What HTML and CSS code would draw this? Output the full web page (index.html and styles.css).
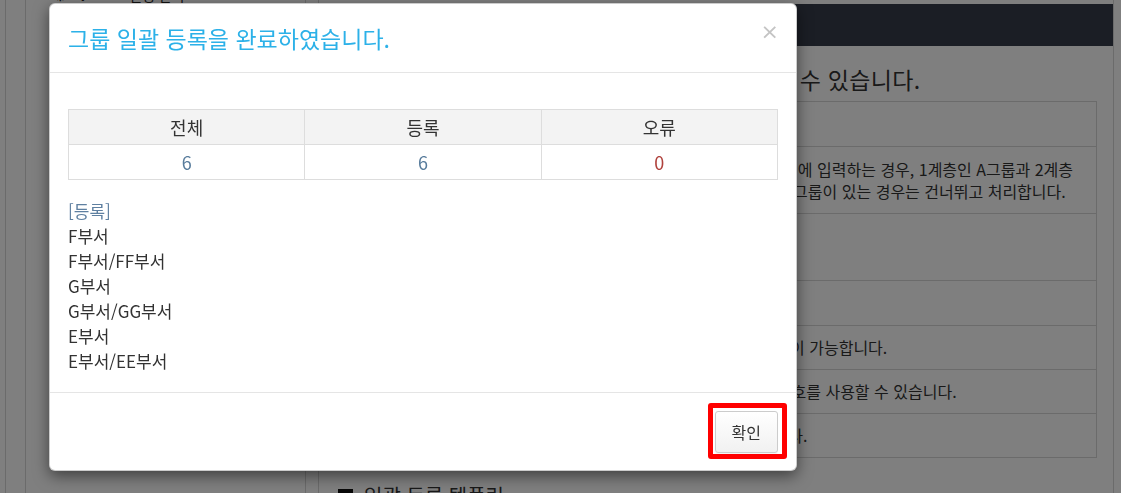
FILE: index.html
```html
<!DOCTYPE html>
<html lang="ko">
<head>
<meta charset="utf-8">
<title>그룹 일괄 등록</title>
<link rel="stylesheet" href="styles.css">
</head>
<body>
<div class="page">
  <div class="rail rail-a"></div>
  <div class="rail rail-b"></div>
  <aside class="sidebar">
    <div class="side-item"><span class="side-ico">⚙</span><span class="side-ico">✱</span><span class="side-text">설정 관리</span></div>
  </aside>
  <div class="rail rail-c"></div>
  <main class="main">
    <div class="topbar"></div>
    <div class="content">
      <h2 class="lead">엑셀 파일로 여러 그룹을 한 번에 일괄로 등록할 수 있습니다.</h2>
      <table class="guide">
        <tr><th>파일 형식</th><td>엑셀(xlsx) 파일만 업로드</td></tr>
        <tr class="two"><th>그룹명</th><td>그룹 이름에 '/'를 사용하여 하위 그룹을 한 번에 입력하는 경우, 1계층인 A그룹과 2계층<br>B그룹이 각각 등록되며, 이미 존재하는 상위 그룹이 있는 경우는 건너뛰고 처리합니다.</td></tr>
        <tr class="two"><th>계층</th><td>최대 5계층까지 입력<br>할 수 있습니다.</td></tr>
        <tr><th>순서</th><td>입력한 순서대로 등록</td></tr>
        <tr class="tight"><th>등록 수</th><td>엑셀 파일로 최대 500개 그룹까지 일괄 등록이 가능합니다.</td></tr>
        <tr class="tight"><th>사용 문자</th><td>그룹 이름에는 한글, 영문, 숫자, 일부 특수기호를 사용할 수 있습니다.</td></tr>
        <tr class="tight"><th>중복</th><td>이미 같은 그룹명이 있으면 등록되지 않습니다.</td></tr>
      </table>
      <h3 class="sec"><span class="sq"></span>일괄 등록 템플릿</h3>
    </div>
  </main>
  <div class="edge"></div>
</div>

<div class="backdrop"></div>

<div class="modal">
  <div class="modal-header">
    <h4 class="modal-title">그룹 일괄 등록을 완료하였습니다.</h4>
    <button class="close" type="button">×</button>
  </div>
  <div class="modal-body">
    <table class="result">
      <thead>
        <tr><th>전체</th><th>등록</th><th>오류</th></tr>
      </thead>
      <tbody>
        <tr><td class="num">6</td><td class="num">6</td><td class="num err">0</td></tr>
      </tbody>
    </table>
    <div class="log">
      <p class="log-title">[등록]</p>
      <p>F부서</p>
      <p>F부서/FF부서</p>
      <p>G부서</p>
      <p>G부서/GG부서</p>
      <p>E부서</p>
      <p>E부서/EE부서</p>
    </div>
  </div>
  <div class="modal-footer">
    <button class="btn" type="button">확인<span class="mark"></span></button>
  </div>
</div>
</body>
</html>
```

FILE: styles.css
```css
* { box-sizing: border-box; }
html, body { margin: 0; padding: 0; height: 100%; }
body {
  font-family: "Noto Sans CJK KR", sans-serif;
  color: #333;
  background: #fff;
  overflow: hidden;
}

.page {
  display: flex;
  height: 493px;
}
.rail { border-right: 1px solid #d6d6d6; }
.rail-a { width: 6px; }
.rail-b { width: 20px; }
.rail-c { width: 13px; }
.sidebar {
  width: 280px;
  border-right: 1px solid #d6d6d6;
  padding-left: 28px;
}
.side-item {
  margin-top: -14px;
  display: flex;
  gap: 10px;
  align-items: center;
  font-size: 14px;
  line-height: 18px;
  color: #222;
}
.side-text { margin-left: 30px; }

.main {
  width: 795px;
  border-right: 1px solid #d6d6d6;
}
.edge { flex: 1; }

.topbar {
  margin-top: 4px;
  height: 42px;
  background: #363c4a;
}
.content { padding: 0 16px 0 19px; }
.lead {
  margin: 18px 0 7px;
  font-size: 23px;
  letter-spacing: 0.3px;
  line-height: 30px;
  font-weight: 400;
  color: #333;
  white-space: nowrap;
}
.guide {
  width: 100%;
  border-collapse: collapse;
  font-size: 16px;
  line-height: 22px;
}
.guide th, .guide td {
  border: 1px solid #d6d6d6;
  padding: 11px 12px;
  text-align: left;
  vertical-align: middle;
  white-space: nowrap;
}
.guide th {
  width: 150px;
  background: #f8f8f8;
  font-weight: 400;
}
.guide tr.tight th, .guide tr.tight td { padding: 10px 12px 11px; }
.sec {
  margin: 24px 0 0;
  display: flex;
  align-items: center;
  gap: 11px;
  font-size: 20px;
  line-height: 28px;
  font-weight: 400;
}
.sq {
  width: 15px;
  height: 14px;
  background: #111;
}

.backdrop {
  position: fixed;
  inset: 0;
  background: rgba(0, 0, 0, 0.5);
}

.modal {
  position: absolute;
  top: 3px;
  left: 49px;
  width: 748px;
  height: 468px;
  background: #fff;
  border: 1px solid rgba(0, 0, 0, 0.2);
  border-radius: 6px;
  box-shadow: 0 5px 15px rgba(0, 0, 0, 0.5);
  display: flex;
  flex-direction: column;
}
.modal-header {
  height: 69px;
  border-bottom: 1px solid #e5e5e5;
  padding: 0 17px 0 18px;
  display: flex;
  align-items: center;
  justify-content: space-between;
}
.modal-title {
  margin: 0;
  font-size: 23px;
  font-weight: 400;
  color: #2cb1e8;
  line-height: 30px;
}
.close {
  border: 0;
  background: none;
  padding: 0;
  font-family: "DejaVu Sans", sans-serif;
  font-size: 22px;
  line-height: 22px;
  color: #c4c4c4;
  margin-top: -12px;
  cursor: pointer;
}
.modal-body {
  flex: 1;
  padding: 36px 18px 0;
}
.result {
  width: 100%;
  table-layout: fixed;
  border-collapse: collapse;
  font-size: 18px;
}
.result th, .result td {
  border: 1px solid #dddddd;
  height: 35px;
  padding: 0;
  text-align: center;
  vertical-align: middle;
}
.result th {
  background: #f3f3f3;
  font-weight: 400;
  color: #333;
}
.result .num { color: #587c9c; font-size: 18px; }
.result .num.err { color: #b0423d; }

.log {
  margin-top: 18px;
  font-size: 17px;
  line-height: 25px;
  color: #333;
}
.log p { margin: 0; }
.log .log-title { color: #5e7fa0; }

.modal-footer {
  border-top: 1px solid #e5e5e5;
  padding: 18px 18px 17px;
  display: flex;
  justify-content: flex-end;
}
.btn {
  position: relative;
  height: 42px;
  padding: 0 16px;
  font-family: "Noto Sans CJK KR", sans-serif;
  font-size: 16px;
  color: #333;
  background: linear-gradient(#ffffff, #f1f1f1);
  border: 1px solid #cccccc;
  border-radius: 3px;
  box-shadow: 0 1px 1px rgba(0, 0, 0, 0.05);
}
.mark {
  position: absolute;
  top: -9px;
  left: -8px;
  right: -10px;
  bottom: -7px;
  border: 5px solid #ff0000;
  border-radius: 3px;
}
```
